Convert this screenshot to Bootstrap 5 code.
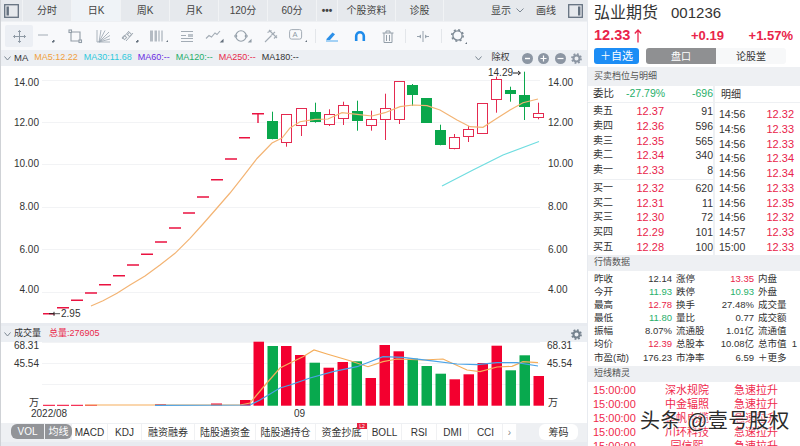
<!DOCTYPE html>
<html lang="zh">
<head>
<meta charset="utf-8">
<title>弘业期货</title>
<link href="https://cdn.jsdelivr.net/npm/bootstrap@5.3.0/dist/css/bootstrap.min.css" rel="stylesheet">
<style>
html,body{margin:0;height:446px;overflow:hidden;background:#e8ebf0}
body,svg text{font-family:"Liberation Sans","Noto Sans CJK SC",sans-serif;color:#333}
.shell{width:800px;height:446px;overflow:hidden}
.leftpane{width:587px;flex:none;border-left:1px solid #cfd2d6}
.rightpane{width:212px;flex:none;position:relative;background:#fff;margin-left:1px;overflow:hidden}
.tabbar{height:22px;background:#e6e9ed;font-size:10px;color:#444;border-bottom:1px solid #eef0f3}
.tb{height:21px;display:flex;align-items:center;justify-content:center;border-right:1px solid #f1f3f5;flex:none}
.tb.w48{width:49px}
.tb.on{background:#eff3f7}
.tb.ic{width:22px}
.tb.dots{width:21px;font-weight:700;font-size:10px}
.tb.w{width:58px}
.tb.w2{width:48px}
.toolrow{height:28px;background:#f8f9fb}
.tool{width:28px;height:22px;display:flex;align-items:center;justify-content:center;flex:none}
.tool.on{background:#eceff4;border-radius:2px}
.tdiv{width:1px;height:14px;background:#e3e6ea;flex:none}
.marow{height:16px;background:#eceff3;font-size:9px;white-space:nowrap}
.vhead{height:16px;background:#eceff3;font-size:9px;margin-top:3px;white-space:nowrap}
.cv{display:block;background:#fff;overflow:visible}
.axis{font-size:10px;fill:#333}
.grid{stroke:#f2f3f5;stroke-width:1}
.cr{fill:#fff;stroke:#e42a50;stroke-width:1}
.cg{fill:#0aa74c;stroke:#0aa74c;stroke-width:1}
.wr{stroke:#e42a50;stroke-width:1}
.wg{stroke:#0aa74c;stroke-width:1}
.dash{stroke:#ea1240;stroke-width:1.4}
.vbr{fill:#f3002f}
.vbg{fill:#08a94e}
.mline{fill:none;stroke-width:1.2}
.btabs{height:19px;font-size:10px;background:#eef0f3;padding-top:1px}
.pill{background:#929498;color:#fff;height:15px;display:flex;align-items:center;justify-content:center}
.bt{background:#fff;height:16px;display:flex;align-items:center;justify-content:center;flex:none;border-right:1px solid #f0f1f3;white-space:nowrap;position:relative;color:#333}
.flag{position:absolute;top:-1px;right:0;width:10px;height:6px;background:#e8213f;color:#fff;font-size:5px;line-height:6px;text-align:center}
.name{height:26px;font-size:16px;padding-left:6px;color:#333;white-space:nowrap}
.name b{font-weight:400;font-size:15px;margin-left:13px}
.quote{height:22px;font-weight:700;color:#e9244a;font-size:13px;padding:0 7px 2px 6px}
.quote .big{font-size:14.5px}
.act{height:19px;padding-left:6px}
.addbtn{width:45px;height:16px;background:#1c8df5;color:#fff;font-size:11px;border-radius:3px;padding:0;border:0;line-height:16px}
.seg{margin-left:7px;width:140px;height:16px;border-radius:3px;overflow:hidden;font-size:10px}
.seg span{flex:1;display:flex;align-items:center;justify-content:center}
.seg .s1{background:#8f9092;color:#fff}
.seg .s2{background:#f7f8f9;color:#333}
.sect{background:#eef0f3;font-size:9px;color:#555;padding-left:6px;display:flex;align-items:center}
.s-a{height:19px}.s-b{height:16px}.s-c{height:16px;margin-top:2px}
.wb{height:17px;font-size:10.5px;border-bottom:1px solid #eef0f3}
.wb1{width:127px;padding-left:5px;border-right:2px solid #eef0f3}
.wb2{padding-left:6px;font-size:10px}
.up{color:#e9244a}.dn{color:#28b06b}
.lp{width:127px;border-right:2px solid #eef0f3;padding:1px 0 0 5px;flex:none;height:152px}
.rp{flex:1;padding:4px 0 0 4px}
.q{height:14.75px;line-height:14.75px;font-size:10.5px;display:flex;white-space:nowrap}
.q i{font-style:normal;width:20px;font-size:10px}
.q em{font-style:normal;width:51px;text-align:right;font-size:11px}
.q u{text-decoration:none;width:49px;text-align:right;font-size:10.5px}
.q s{text-decoration:none;width:35px;font-size:10.5px}
.q strong{font-weight:400;width:40px;text-align:right;font-size:11px}
.qsep{height:1px;background:#eef0f3;margin:1px 0}
.mtable{padding-top:1px}
.m{height:13.1px;line-height:13.1px;font-size:9.5px;display:flex;white-space:nowrap;padding-left:6px}
.m i{font-style:normal;width:26px}
.m u{text-decoration:none;width:52px;text-align:right;margin-right:4px}
.m b{font-weight:400}
.flash{height:14px;line-height:14px;font-size:11px;color:#ef2a4d;display:flex;white-space:nowrap;padding-left:5px}
.flash i{font-style:normal;width:72px}
.flash em{font-style:normal;width:44px;text-align:center;margin-right:25px}
.wm{position:absolute;left:52px;top:406px;font-size:20px;color:#2b2b2b;white-space:nowrap;text-shadow:0 0 2px #fff,1px 1px 1px #fff;letter-spacing:.5px}
</style>
</head>
<body>
<div class="shell d-flex">
<div class="leftpane d-flex flex-column">
  <div class="tabbar d-flex">
    <div class="tb ic"><svg width="15" height="14" viewBox="0 0 15 14"><rect x=".7" y=".7" width="13.6" height="12.6" fill="none" stroke="#64717f" stroke-width="1.3"/><rect x="2.5" y="2.5" width="2.4" height="9" fill="#64717f"/></svg></div>
    <div class="tb w48">分时</div><div class="tb w48 on">日K</div><div class="tb w48">周K</div><div class="tb w48">月K</div><div class="tb w48">120分</div><div class="tb w48">60分</div>
    <div class="tb dots">•••</div><div class="tb w">个股资料</div><div class="tb w2">诊股</div>
    <div class="ms-auto d-flex align-items-center pe-1" style="gap:12px">
      <span class="d-flex align-items-center" style="gap:5px">显示<svg width="8" height="5" viewBox="0 0 8 5"><path d="M.5.5 4 4 7.5.5" fill="none" stroke="#7c8792"/></svg></span><span>画线</span>
      <svg width="15" height="14" viewBox="0 0 15 14"><rect x=".7" y=".7" width="13.6" height="12.6" fill="none" stroke="#64717f" stroke-width="1.3"/><rect x="10" y="2.5" width="2.4" height="9" fill="#64717f"/></svg>
    </div>
  </div>
  <div class="toolrow d-flex align-items-center" style="padding-left:4px">
    <div class="tool on"><svg width="15" height="15" viewBox="0 0 15 15" fill="none" stroke="#8f9aa5"><path d="M7.5 1.500v12M1.500 7.500h12M6 3 7.500 1.500 9 3M6 12 7.500 13.500 9 12M3 6 1.500 7.500 3 9M12 6 13.500 7.500 12 9"/></svg></div>
    <div class="tool"><svg width="20" height="14" viewBox="0 0 20 14" fill="none" stroke="#a3acb5"><path d="M1 6h10"/><path d="M17 11v2h-2z" fill="#66727e" stroke="#66727e"/></svg></div>
    <div class="tool"><svg width="15" height="15" viewBox="0 0 15 15" fill="none" stroke="#939ea8" stroke-width="1.100"><path d="M3 3h9v9H3z"/><rect x="1" y="1" width="2.500" height="2.500" fill="#f8f9fb"/><rect x="11" y="11" width="2.500" height="2.500" fill="#f8f9fb"/></svg></div>
    <div class="tool"><svg width="15" height="14" viewBox="0 0 15 14" fill="none" stroke="#98a3ae" stroke-width=".8"><path d="M1 13h13M1 13V1M3 13 5 1M3 13 9 1.500M3 13 13 3M3 13 14 6.500M3 13 14 10"/></svg></div>
    <div class="tool"><svg width="20" height="14" viewBox="0 0 20 14" fill="none" stroke="#a3acb5" stroke-width="1"><path d="M1 10 8 2M5 12l7-8"/><rect x="2" y="7" width="3" height="3" transform="rotate(45 3.500 8.500)"/><rect x="7" y="4" width="3" height="3" transform="rotate(45 8.500 5.500)"/><path d="M17 11v2h-2z" fill="#66727e" stroke="#66727e"/></svg></div>
    <div class="tool"><svg width="20" height="14" viewBox="0 0 20 14"><path d="M1 1.500h3v11H1zM5.500 1.500h2.500v11H5.500z" fill="#b4bbc3"/><path d="M9.500 1.500h1v11h-1zM12.500 1.500h1v11h-1z" fill="#98a3ae"/><path d="M19 11v2h-2z" fill="#66727e"/></svg></div>
    <div class="tool"><svg width="14" height="13" viewBox="0 0 14 13" fill="none" stroke="#a3acb5"><path d="M1 1.500h12M1 5.500h5M1 8.500h12M1 11.500h12"/><path d="M8 4h5v3H8z" fill="#bcc3ca" stroke="none"/></svg></div>
    <div class="tool"><svg width="20" height="14" viewBox="0 0 20 14" fill="none" stroke="#a3acb5" stroke-width="1.100"><path d="M1 9.500 4 6.500 6.500 8 10 4 12 5.500 15 2"/><path d="M18 11v2h-2z" fill="#66727e" stroke="#66727e"/></svg></div>
    <div class="tool"><svg width="20" height="14" viewBox="0 0 20 14" fill="none" stroke="#939ea8" stroke-width="1.100"><circle cx="8" cy="7" r="5.200"/><circle cx="2.800" cy="7" r="1" fill="#f8f9fb"/><circle cx="13.200" cy="7" r="1" fill="#f8f9fb"/><path d="M18 11v2h-2z" fill="#66727e"/></svg></div>
    <div class="tool"><svg width="14" height="14" viewBox="0 0 14 14" fill="none" stroke="#a3acb5" stroke-width="1.100"><path d="M1 13 7.500 6.500M5 1l8 8M3.500 3.500l4-2M7.500 6 11 3M10 9.500l3-3"/></svg></div>
    <div class="tool"><svg width="20" height="14" viewBox="0 0 20 14" fill="none"><rect x=".6" y=".6" width="12" height="9.500" rx="2" stroke="#a3acb5"/><text x="3.500" y="8.200" font-size="7.500" style="fill:#8f9aa5">A</text><path d="M18 11v2h-2z" fill="#66727e"/></svg></div>
    <div class="tdiv" style="margin:0 2px"></div>
    <div class="tool"><svg width="14" height="12" viewBox="0 0 14 12"><path d="M1.500 9 7.500 2.500l2.500 1.800L5 10H1.500z" fill="#2b8fe8"/><path d="M1 11h12" stroke="#7fc0f2" stroke-width="1.400"/></svg></div>
    <div class="tool"><svg width="12" height="12" viewBox="0 0 12 12" fill="none"><path d="M2.200 11V6a3.800 3.800 0 0 1 7.600 0v5" stroke="#1e8bea" stroke-width="2.600"/></svg></div>
    <div class="tool"><svg width="12" height="13" viewBox="0 0 12 13" fill="none" stroke="#939ea8"><path d="M.5 3h11M4 3V1h4v2M2 3v9.500h8V3M4.500 5v6M7.500 5v6"/></svg></div>
    <div class="tdiv" style="margin-left:3px"></div>
    <div class="tool" style="margin-left:3px"><svg width="14" height="11" viewBox="0 0 14 11" fill="none" stroke="#98a3ae"><path d="M7 0v11M1 5.500h4M9 5.500h4"/><path d="M5 3.500v4L2.500 5.500zM9 3.500v4l2.500-2z" fill="#98a3ae" stroke="none"/></svg></div>
    <div class="tdiv" style="margin-left:4px"></div>
    <div class="tool" style="margin-left:3px"><svg width="18" height="17" viewBox="0 0 18 17" fill="none" stroke="#7d8994"><circle cx="7.500" cy="7.500" r="4.600" stroke-width="1.300"/><circle cx="7.500" cy="7.500" r="5.700" stroke-width="1.600" stroke-dasharray="2 2.480"/><path d="M17 14v2h-2z" fill="#66727e" stroke="none"/></svg></div>
  </div>
  <div class="marow d-flex align-items-center">
    <svg style="margin:0 3px" width="7" height="5" viewBox="0 0 7 5"><path d="M.5.500 3.500 4 6.500.5" fill="none" stroke="#7c8792"/></svg>
    <span style="font-size:9.500px">MA</span>
    <span style="margin-left:6px;color:#f0a03c">MA5:12.22</span>
    <span style="margin-left:6px;color:#2fc9dc">MA30:11.68</span>
    <span style="margin-left:6px;color:#6a2be2">MA60:--</span>
    <span style="margin-left:6px;color:#1fae6a">MA120:--</span>
    <span style="margin-left:6px;color:#e8294a">MA250:--</span>
    <span style="margin-left:6px;color:#333">MA180:--</span>
    <span class="ms-auto d-flex align-items-center" style="padding-right:5px">
      <svg width="7" height="5" viewBox="0 0 7 5"><path d="M.5.500 3.500 4 6.500.5" fill="none" stroke="#7c8792"/></svg>
      <span style="margin:0 12px 0 9px">除权</span>
      <span class="d-flex" style="gap:5.500px">
      <svg width="11" height="11" viewBox="0 0 11 11"><circle cx="5.500" cy="5.500" r="5.500" fill="#8c96a3"/><path d="M3 5.500h5" stroke="#fff" stroke-width="1.400"/></svg>
      <svg width="11" height="11" viewBox="0 0 11 11"><circle cx="5.500" cy="5.500" r="5.500" fill="#8c96a3"/><path d="M2.500 5.500h6M5.500 2.500v6" stroke="#fff" stroke-width="1.200"/></svg>
      <svg width="11" height="11" viewBox="0 0 11 11"><circle cx="5.500" cy="5.500" r="5.500" fill="#8c96a3"/><path d="M2.500 5.500h6" stroke="#fff" stroke-width="1.200"/></svg>
      <svg width="11" height="11" viewBox="0 0 11 11" fill="none" stroke="#8c96a3"><circle cx="5.500" cy="5.500" r="3" stroke-width="2"/><circle cx="5.500" cy="5.500" r="4.500" stroke-width="1.800" stroke-dasharray="1.800 1.730"/></svg>
      </span>
    </span>
  </div>
  <svg class="cv" width="586" height="257" viewBox="1 66 586 257">
    <path class="grid" d="M42 80.500H540M42 122.500H540M42 164.500H540M42 207.500H540M42 249.500H540M42 292.500H540"/>
    <g class="axis" text-anchor="end">
      <text x="39" y="86">14.00</text><text x="39" y="126">12.00</text><text x="39" y="167">10.00</text><text x="39" y="210">8.00</text><text x="39" y="253">6.00</text><text x="39" y="293">4.00</text>
    </g>
    <g class="axis">
      <text x="548" y="86">14.00</text><text x="548" y="126">12.00</text><text x="548" y="167">10.00</text><text x="548" y="210">8.00</text><text x="548" y="253">6.00</text><text x="548" y="293">4.00</text>
    </g>
    <path class="dash" d="M43 313.700h12M57 307.700h12M71 300.300h12M85 293h12M99 284.700h12M113 275.700h12M127 265h12M141 254.300h12M155 242h12M169 228h12M183 213h12M197 197h12M211 179.700h12M225 159h12M239 137.700h11M252 113.700h12M258 113.700v9.300"/>
    <path class="wg" d="M272.500 111.700v27.600M315.500 102.700v20M357.500 100.700v30M412.500 84v22M440.500 124.700v20.600M510.500 86.700v15M524.500 71.700v48.300"/>
    <path class="wr" d="M286.500 142.300v4.400M301.500 125.300v10.700M329.500 109.300v5.400M329.500 124.300v1.700M343.500 101.700v3.600M343.500 118.300v6.700M371.500 110.700v9M371.500 125.300v5.400M385.500 93.700v15M385.500 119.300v20.700M399.500 119.300v4.700M454.500 134v3.700M454.500 148.300v1M468.500 126v3.300M468.500 136v6M496.500 76.700v2.600M496.500 99.700v13M538.500 102.700v10.300M538.500 117.300v2"/>
    <g class="cg"><rect x="267.500" y="121.500" width="10" height="17"/><rect x="310.500" y="112.500" width="10" height="9"/><rect x="352.500" y="111.500" width="10" height="9"/><rect x="407.500" y="85.500" width="10" height="9"/><rect x="421.500" y="98.500" width="10" height="24"/><rect x="435.500" y="130.500" width="10" height="14"/><rect x="505.500" y="90.500" width="10" height="3"/><rect x="519.500" y="95.500" width="10" height="11"/></g>
    <g class="cr"><rect x="281.500" y="114.500" width="10" height="28"/><rect x="296.500" y="108.500" width="10" height="17"/><rect x="324.500" y="114.500" width="10" height="10"/><rect x="338.500" y="105.500" width="10" height="13"/><rect x="366.500" y="119.500" width="10" height="6"/><rect x="380.500" y="108.500" width="10" height="11"/><rect x="394.500" y="81.500" width="10" height="38"/><rect x="449.500" y="137.500" width="10" height="11"/><rect x="463.500" y="129.500" width="10" height="7"/><rect x="477.500" y="103.500" width="10" height="30"/><rect x="491.500" y="79.500" width="10" height="20"/><rect x="533.500" y="113.500" width="10" height="4"/></g>
    <polyline class="mline" stroke="#f3b474" points="91,306 103,300.700 117,293.300 130,285 145,276 160,265 175,253.300 190,238.300 203,224 217,208 230,193 243,176.700 257,158.500 272,143 282,138 290,128 300,121.700 315,119.300 328,119 342,112.700 357,114.300 372,116 385,112.700 400,106.700 413,105 427,105.700 440,110 457,120 470,126.700 483,127.300 497,118.300 510,110 523,102.700 538,99"/>
    <polyline class="mline" stroke="#6fdde0" points="442,186 473,170 503,155 539,141.500"/>
    <path d="M49 313.700h5M54 311.800v4" stroke="#222" fill="none"/><path d="M54 313.700h6" stroke="#555"/>
    <text class="axis" x="61" y="317">2.95</text>
    <text class="axis" x="488" y="76">14.29</text>
    <path d="M513 73h7M518 71l2.500 2-2.500 2" fill="none" stroke="#222"/>
  </svg>
  <div class="vhead d-flex align-items-center">
    <svg style="margin:0 3px" width="7" height="5" viewBox="0 0 7 5"><path d="M.5.500 3.500 4 6.500.5" fill="none" stroke="#7c8792"/></svg>
    <span style="font-size:9px">成交量</span>
    <span style="margin-left:8px;color:#ea2a4c">总量:276905</span>
    <svg class="ms-auto" style="margin-right:5px" width="11" height="11" viewBox="0 0 11 11" fill="none" stroke="#76838f"><circle cx="5.500" cy="5.500" r="3" stroke-width="2"/><circle cx="5.500" cy="5.500" r="4.500" stroke-width="1.800" stroke-dasharray="1.800 1.730"/></svg>
  </div>
  <svg class="cv" width="586" height="81" viewBox="1 342 586 81">
    <path class="grid" d="M42 342.500H540M42 363.500H540M42 384.500H540"/>
    <g class="axis" text-anchor="end"><text x="39" y="349">68.31</text><text x="39" y="367">45.54</text><text x="39" y="406">万</text></g>
    <g class="axis"><text x="547" y="349">68.31</text><text x="547" y="367">45.54</text><text x="548" y="406">万</text></g>
    <text class="axis" x="31" y="417">2022/08</text><text class="axis" x="294" y="417">09</text>
    <path d="M43 405.300h12M57 405.300h12M71 405.300h12M85 405.300h12M155 404.700h11" stroke="#f3002f" stroke-width="1"/>
    <g class="vbr"><rect x="211" y="403.500" width="11" height="2"/><rect x="240" y="400" width="10.500" height="5.700"/><rect x="253.500" y="341.700" width="10.500" height="64"/><rect x="281" y="346" width="10.500" height="59.700"/><rect x="295" y="355" width="10.500" height="50.700"/><rect x="323.500" y="367.700" width="10.500" height="38"/><rect x="337.500" y="362" width="10.500" height="43.700"/><rect x="365.500" y="378" width="10.500" height="27.700"/><rect x="379.500" y="345" width="10.500" height="60.700"/><rect x="393.500" y="351.300" width="10.500" height="54.400"/><rect x="449.500" y="379.300" width="10.500" height="26.400"/><rect x="463.500" y="374.300" width="10.500" height="31.400"/><rect x="477.500" y="363" width="10.500" height="42.700"/><rect x="491.500" y="345.700" width="10.500" height="60"/><rect x="533.500" y="376" width="10.500" height="29.700"/></g>
    <g class="vbg"><rect x="267.500" y="346" width="10.500" height="59.700"/><rect x="309.500" y="362.700" width="10.500" height="43"/><rect x="351.500" y="361.300" width="10.500" height="44.400"/><rect x="407.500" y="358.700" width="10.500" height="47"/><rect x="421.500" y="366" width="10.500" height="39.700"/><rect x="435.500" y="373.700" width="10.500" height="32"/><rect x="505.500" y="370.300" width="10.500" height="35.400"/><rect x="519.500" y="355.300" width="10.500" height="50.400"/></g>
    <polyline class="mline" stroke="#f5ae5c" points="85,405 240,405 250,403 266,384 280,368 290,363 303,356.700 314,350 327,354 350,360.700 368,366.700 383,361.700 397,359 423,360 443,359 467,370 480,371.700 497,367 512,366.300 523,361.700 538,362.700"/>
    <polyline class="mline" stroke="#4aa3e8" points="155,405.300 250,405 260,400 280,388 290,385 310,378 333,371.700 357,366.700 370,361.700 383,356.700 403,357.300 430,360.700 457,364 477,364.700 497,362.700 517,362.700 538,366"/>
  </svg>
  <div class="btabs d-flex" style="padding-left:10px">
    <div class="pill rounded-start" style="width:33px">VOL</div>
    <div class="pill rounded-end" style="width:27px;margin-left:1px">均线</div>
    <div class="bt" style="width:36px">MACD</div>
    <div class="bt" style="width:34px">KDJ</div>
    <div class="bt" style="width:53px">融资融券</div>
    <div class="bt" style="width:61px">陆股通资金</div>
    <div class="bt" style="width:60px">陆股通持仓</div>
    <div class="bt" style="width:52px">资金抄底<span class="flag">L2</span></div>
    <div class="bt" style="width:34px">BOLL</div>
    <div class="bt" style="width:35px">RSI</div>
    <div class="bt" style="width:32px">DMI</div>
    <div class="bt" style="width:34px">CCI</div>
    <div class="bt" style="width:14px;color:#888">›</div>
    <div class="bt ms-auto rounded" style="width:39px;margin-right:9px;border:0">筹码</div>
  </div>
</div>
<div class="rightpane">
  <div class="name d-flex align-items-center">弘业期货<b>001236</b></div>
  <div class="quote d-flex align-items-center justify-content-between"><span class="big d-flex align-items-center">12.33<svg class="ms-1" width="8" height="14" viewBox="0 0 8 14"><path d="M4 13.500V1M.8 4.500 4 1l3.200 3.500" fill="none" stroke="#e9244a" stroke-width="1.300"/></svg></span><span style="margin-left:24px">+0.19</span><span>+1.57%</span></div>
  <div class="act d-flex"><button class="addbtn btn">＋自选</button><div class="seg d-flex"><span class="s1">盘口</span><span class="s2">论股堂</span></div></div>
  <div class="sect s-a">买卖档位与明细</div>
  <div class="wb d-flex align-items-center"><div class="wb1 d-flex" style="white-space:nowrap"><span style="width:33px">委比</span><span class="dn" style="width:41px">-27.79%</span><span class="dn text-end" style="width:46px">-696</span></div><div class="wb2">明细</div></div>
  <div class="d-flex">
    <div class="lp">
      <div class="q"><i>卖五</i><em class="up">12.37</em><u>91</u></div>
      <div class="q"><i>卖四</i><em class="up">12.36</em><u>596</u></div>
      <div class="q"><i>卖三</i><em class="up">12.35</em><u>565</u></div>
      <div class="q"><i>卖二</i><em class="up">12.34</em><u>340</u></div>
      <div class="q"><i>卖一</i><em class="up">12.33</em><u>8</u></div>
      <div class="qsep"></div>
      <div class="q"><i>买一</i><em class="up">12.32</em><u>620</u></div>
      <div class="q"><i>买二</i><em class="up">12.31</em><u>11</u></div>
      <div class="q"><i>买三</i><em class="up">12.30</em><u>72</u></div>
      <div class="q"><i>买四</i><em class="up">12.29</em><u>101</u></div>
      <div class="q"><i>买五</i><em class="up">12.28</em><u>100</u></div>
    </div>
    <div class="rp">
      <div class="q"><s>14:56</s><strong class="up">12.32</strong></div>
      <div class="q"><s>14:56</s><strong class="up">12.33</strong></div>
      <div class="q"><s>14:56</s><strong class="up">12.33</strong></div>
      <div class="q"><s>14:56</s><strong class="up">12.34</strong></div>
      <div class="q"><s>14:56</s><strong class="up">12.34</strong></div>
      <div class="q"><s>14:56</s><strong class="up">12.33</strong></div>
      <div class="q"><s>14:56</s><strong class="up">12.35</strong></div>
      <div class="q"><s>14:56</s><strong class="up">12.32</strong></div>
      <div class="q"><s>14:57</s><strong class="up">12.33</strong></div>
      <div class="q"><s>15:00</s><strong class="up">12.33</strong></div>
    </div>
  </div>
  <div class="sect s-b">行情数据</div>
  <div class="mtable">
    <div class="m"><i>昨收</i><u>12.14</u><i>涨停</i><u class="up">13.35</u><b>内盘</b></div>
    <div class="m"><i>今开</i><u class="dn">11.93</u><i>跌停</i><u class="dn">10.93</u><b>外盘</b></div>
    <div class="m"><i>最高</i><u class="up">12.78</u><i>换手</i><u>27.48%</u><b>成交量</b></div>
    <div class="m"><i>最低</i><u class="dn">11.80</u><i>量比</i><u>0.77</u><b>成交额</b></div>
    <div class="m"><i>振幅</i><u>8.07%</u><i>流通股</i><u>1.01亿</u><b>流通值</b></div>
    <div class="m"><i>均价</i><u class="up">12.39</u><i>总股本</i><u>10.08亿</u><b>总市值&nbsp;&nbsp;1</b></div>
    <div class="m"><i>市盈(动)</i><u>176.23</u><i>市净率</i><u>6.59</u><b>＋更多</b></div>
  </div>
  <div class="sect s-c">短线精灵</div>
  <div style="padding-top:1px">
    <div class="flash"><i>15:00:00</i><em>深水规院</em><span>急速拉升</span></div>
    <div class="flash"><i>15:00:00</i><em>中金辐照</em><span>急速拉升</span></div>
    <div class="flash"><i>15:00:00</i><em>起帆电缆</em><span>急速拉升</span></div>
    <div class="flash"><i>15:00:00</i><em>川环科技</em><span>急速拉升</span></div>
    <div class="flash"><i>15:00:00</i><em>园信熙</em><span>急速拉升</span></div>
  </div>
  <div class="wm">头条 @壹号股权</div>
</div>
</div>
</body>
</html>
